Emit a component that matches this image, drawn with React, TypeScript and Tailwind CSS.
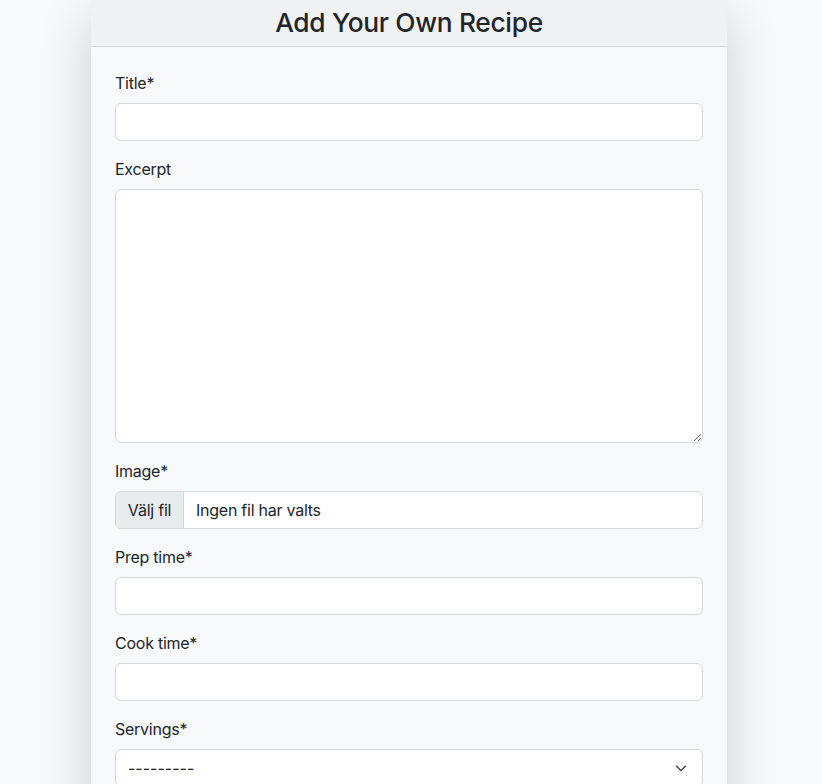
import React from "react";

const inputCls =
  "block w-full h-[38px] bg-white border border-[#d3d8de] rounded-[6px] px-3 text-[16px] text-[#212529] outline-none";

function Field({ label, children }: { label: string; children: React.ReactNode }) {
  return (
    <div className="mb-4">
      <label className="block mb-2 leading-6 text-[16px] text-[#212529] tracking-[-0.25px]">{label}</label>
      {children}
    </div>
  );
}

export default function App() {
  return (
    <div
      className="min-h-[784px] bg-[#f8f9fa] flex justify-center"
      style={{ fontFamily: 'Inter, "Noto Sans", sans-serif' }}
    >
      <div className="w-[636px] ml-[-4px] bg-[#f8f9fa] shadow-[0_16px_48px_rgba(0,0,0,0.175)] self-start">
        <div className="h-[47px] bg-[#f0f1f2] border-b border-[#d5d7d9] flex items-center justify-center">
          <h3 className="text-[26.3px] font-medium text-[#212529] leading-none tracking-[-0.3px]">
            Add Your Own Recipe
          </h3>
        </div>
        <div className="px-6 pt-6 pb-6">
          <Field label="Title*">
            <input className={inputCls} />
          </Field>
          <Field label="Excerpt">
            <textarea className="block w-full h-[254px] bg-white border border-[#d3d8de] rounded-[6px] px-3 py-1.5 text-[16px] outline-none" />
          </Field>
          <Field label="Image*">
            <div className="flex h-[38px] bg-white border border-[#d3d8de] rounded-[6px] overflow-hidden tracking-[-0.25px]">
              <div className="w-[68px] bg-[#e9ecef] border-r border-[#d3d8de] flex items-center justify-center text-[16px] text-[#212529]">
                Välj fil
              </div>
              <div className="flex items-center pl-3 text-[16px] text-[#212529]">Ingen fil har valts</div>
            </div>
          </Field>
          <Field label="Prep time*">
            <input className={inputCls} />
          </Field>
          <Field label="Cook time*">
            <input className={inputCls} />
          </Field>
          <Field label="Servings*">
            <div className="relative h-[38px] bg-white border border-[#d3d8de] rounded-[6px] flex items-center pl-3 text-[16px] text-[#212529]">
              ---------
              <svg
                className="absolute right-[14px] top-1/2 -translate-y-1/2"
                width="14"
                height="14"
                viewBox="0 0 16 16"
                fill="none"
                stroke="#343a40"
                strokeWidth="1.6"
                strokeLinecap="round"
                strokeLinejoin="round"
              >
                <path d="M3 6l5 5 5-5" />
              </svg>
            </div>
          </Field>
        </div>
      </div>
    </div>
  );
}
